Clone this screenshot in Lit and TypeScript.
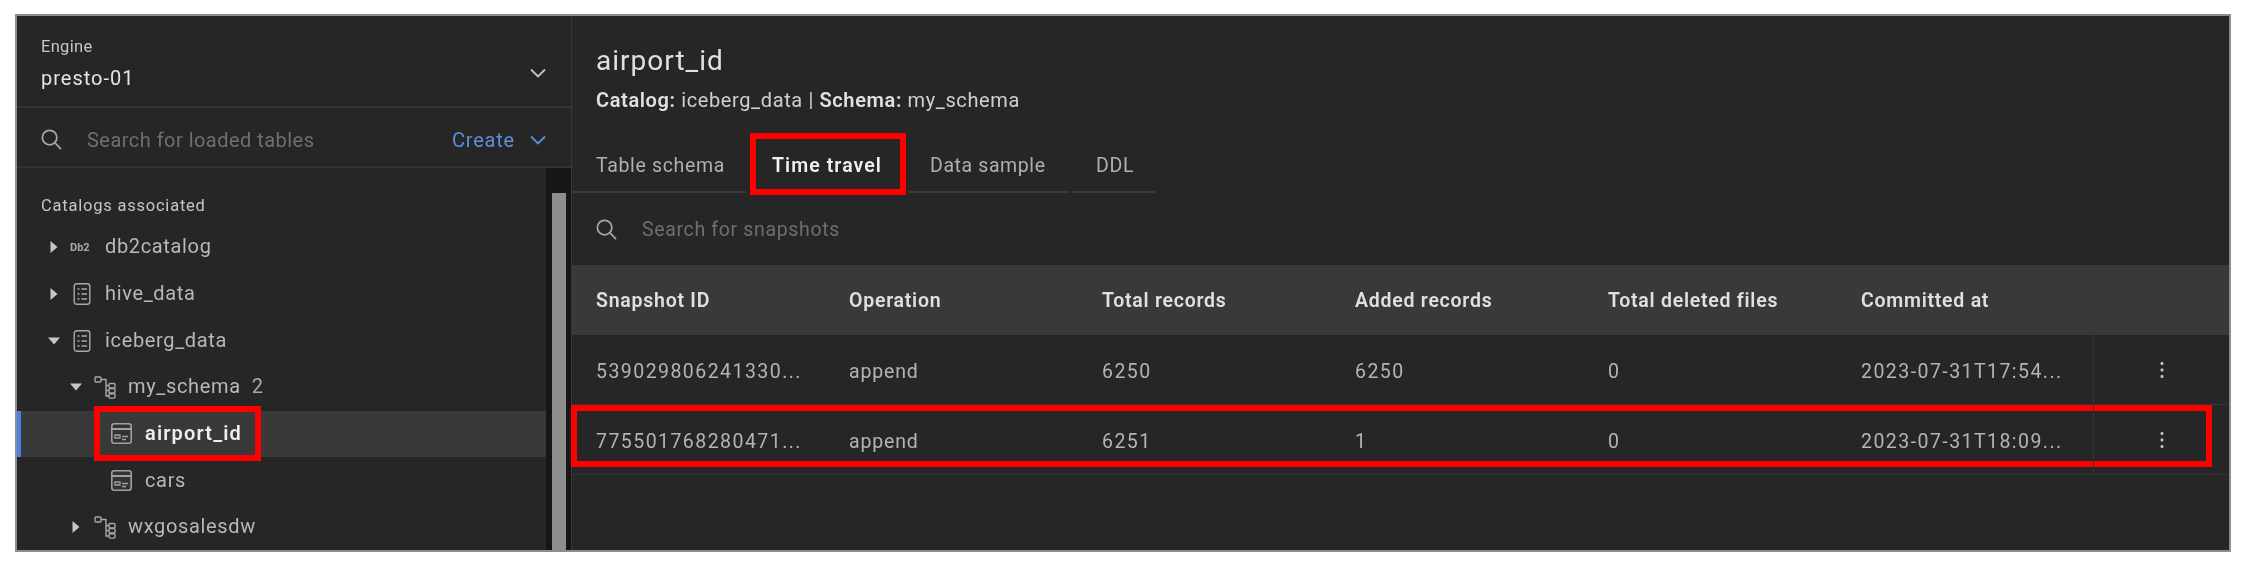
import { LitElement, html, css } from "lit";
import { customElement } from "lit/decorators.js";

const searchIcon = html`<svg class="search" viewBox="0 0 22 22" fill="none" stroke="currentColor" stroke-width="1.8"><circle cx="9" cy="9" r="7.6"/><path d="M14.6 14.6 21 21"/></svg>`;
const chevron = html`<svg class="chev" viewBox="0 0 16 10" fill="none" stroke="currentColor" stroke-width="1.8"><path d="M1 1.5 8 8.5 15 1.5"/></svg>`;
const catalogIcon = html`<svg class="ic cat" viewBox="0 0 18 22" fill="none" stroke="#a8a8a8" stroke-width="1.4"><rect x="1.2" y=".8" width="15.6" height="20.4" rx="2.4"/><path d="M4.5 6h2M4.5 11h2M4.5 16h2M8.5 6h5.5M8.5 11h5.5M8.5 16h5.5"/></svg>`;
const schemaIcon = html`<svg class="ic sch" viewBox="0 0 22 23" fill="none" stroke="#a8a8a8" stroke-width="1.4"><rect x="1" y="1" width="6" height="5" rx="1"/><path d="M7 3.5h5V20h3M12 9.5h3M12 14.5h3"/><rect x="15" y="7.5" width="6" height="4.4" rx="1"/><rect x="15" y="12.6" width="6" height="4.4" rx="1"/><rect x="15" y="17.7" width="6" height="4.4" rx="1"/></svg>`;
const tableIcon = html`<svg class="ic tbl" viewBox="0 0 21 21"><rect x=".8" y=".8" width="19.4" height="19.4" rx="2.4" fill="#333" stroke="#a0a0a0" stroke-width="1.6"/><path d="M1 6h19" stroke="#a0a0a0" stroke-width="2"/><path d="M4 12h5v3H4ZM11 13.5h6M11 16.5h4" fill="none" stroke="#a0a0a0" stroke-width="1.3"/></svg>`;
const arrowRight = html`<svg class="arr" viewBox="0 0 8 12"><path d="M.5 0 7.5 6 .5 12Z" fill="#c6c6c6"/></svg>`;
const arrowDown = html`<svg class="arr down" viewBox="0 0 12 8"><path d="M0 .5H12L6 7.5Z" fill="#c6c6c6"/></svg>`;
const kebab = html`<svg class="keb" viewBox="0 0 4 16" fill="#c6c6c6"><rect x=".6" y="0" width="2.8" height="3" rx="1"/><rect x=".6" y="6.5" width="2.8" height="3" rx="1"/><rect x=".6" y="13" width="2.8" height="3" rx="1"/></svg>`;

const cols = ["Snapshot ID", "Operation", "Total records", "Added records", "Total deleted files", "Committed at"];
const rows = [
  ["539029806241330...", "append", "6250", "6250", "0", "2023-07-31T17:54..."],
  ["775501768280471...", "append", "6251", "1", "0", "2023-07-31T18:09..."],
];

@customElement("app-root")
export class AppRoot extends LitElement {
  static styles = css`
    :host {
      display: block;
      width: 2246px;
      height: 564px;
      background: #fff;
      box-sizing: border-box;
      padding: 14px 15px 12px;
      font-family: Roboto, "Noto Sans", sans-serif;
      color: #c6c6c6;
      overflow: hidden;
    }
    .panel {
      display: flex;
      height: 538px;
      box-sizing: border-box;
      border: 2px solid #8d8d8d;
      background: #262626;
      filter: blur(0.55px);
    }
    .side {
      width: 554px;
      flex: none;
      display: flex;
      flex-direction: column;
      border-right: 1px solid #393939;
      box-sizing: content-box;
    }
    .engine {
      height: 92px;
      flex: none;
      box-sizing: border-box;
      border-bottom: 2px solid #333;
      padding: 19px 24px 0;
      display: flex;
      justify-content: space-between;
      align-items: flex-start;
    }
    .engine .lbl { font-size: 16.5px; line-height: 24px; color: #c6c6c6; letter-spacing: 0.3px; }
    .engine .val { font-size: 20px; line-height: 28px; margin-top: 5px; color: #e4e4e4; letter-spacing: 1px; }
    .engine .chev { margin-top: 33px; color: #c6c6c6; margin-right: 1px; }
    .chev { width: 16px; height: 10px; }
    .sbar {
      height: 60px;
      flex: none;
      box-sizing: border-box;
      border-bottom: 2px solid #333;
      padding: 5px 24px 0;
      display: flex;
      align-items: center;
    }
    .search { width: 21px; height: 21px; color: #a8a8a8; flex: none; }
    .ph { color: #6f6f6f; font-size: 20px; }
    .sbar .ph { margin-left: 25px; flex: 1; letter-spacing: 0.47px; }
    .create { color: #5f8fdc; font-size: 20px; letter-spacing: 0.8px; margin-right: 15px; }
    .sbar .chev { color: #5f8fdc; margin-right: 1px; }
    .treewrap { flex: 1; display: flex; min-height: 0; }
    .tree { flex: 1; min-width: 0; }
    .tree .head {
      height: 56px;
      box-sizing: border-box;
      padding: 24px 0 0 24px;
      font-size: 16.5px;
      line-height: 28px;
      letter-spacing: 0.78px;
    }
    .row {
      height: 46.67px;
      box-sizing: border-box;
      display: flex;
      align-items: center;
      font-size: 20px;
      color: #b8b8b8;
      position: relative;
      letter-spacing: 0.65px;
    }
    .row .txt { margin-top: -2px; }
    .row.l0 { padding-left: 32px; }
    .row.l1 { padding-left: 54px; }
    .row.l2 { padding-left: 94px; }
    .aw { width: 23px; flex: none; display: flex; align-items: center; padding-left: 1px; box-sizing: border-box; }
    .iw { width: 33px; flex: none; display: flex; align-items: center; }
    .l1 .iw, .l2 .iw { width: 34px; }
    .arr { width: 8px; height: 12px; }
    .arr.down { width: 12px; height: 8px; margin-left: -2px; }
    .ic.cat { width: 18px; height: 22px; margin-left: 1px; }
    .ic.sch { width: 22px; height: 23px; }
    .ic.tbl { width: 21px; height: 21px; }
    .db2 { font-size: 11px; font-weight: 700; color: #a8a8a8; letter-spacing: 0; margin-left: -2px; }
    .count { margin-left: 11px; color: #a8a8a8; margin-top: -2px; }
    .row.sel {
      background: #393939;
      box-shadow: inset 4px 0 0 #4a80e8;
      color: #eee;
      font-weight: 600;
      letter-spacing: 1.15px;
    }
    .mark {
      position: absolute;
      box-sizing: border-box;
      border: 6px solid #ff0000;
      pointer-events: none;
    }
    .mark.leaf { left: 77px; top: -5px; width: 167px; height: 55px; }
    .mark.tabm { left: 2px; top: -1px; width: 156px; height: 62px; }
    .mark.rowm { left: -1px; top: 0; width: 1641px; height: 62px; border-width: 6.5px; }
    .scroll { width: 25px; flex: none; background: #161616; padding: 25px 5px 0 6px; box-sizing: border-box; }
    .thumb { height: 100%; background: #8d8d8d; }
    .main { flex: 1; min-width: 0; display: flex; flex-direction: column; }
    .top { height: 118px; flex: none; box-sizing: border-box; padding: 26px 24px 0; }
    .title { font-size: 28px; line-height: 38px; color: #e0e0e0; letter-spacing: 1px; }
    .sub { font-size: 20px; line-height: 26px; margin-top: 7px; color: #d0d0d0; letter-spacing: 0.62px; }
    .sub b { font-weight: 600; color: #e0e0e0; }
    .tabs { display: flex; height: 59px; flex: none; gap: 2px; align-items: stretch; }
    .tab {
      padding: 6px 24px 0;
      display: flex;
      align-items: center;
      font-size: 19.5px;
      letter-spacing: 0.66px;
      color: #b0b0b0;
      box-sizing: border-box;
      border-bottom: 2px solid #393939;
      position: relative;
      white-space: nowrap;
    }
    .tab.w1 { width: 174px; }
    .tab.w2 { width: 158px; font-weight: 600; color: #f0f0f0; letter-spacing: 1.08px; border-bottom-color: transparent; }
    .tab.w3 { width: 162px; padding-left: 22px; letter-spacing: 0.6px; }
    .tab.w4 { width: 84px; }
    .tsearch {
      height: 72px;
      flex: none;
      box-sizing: border-box;
      padding: 0 24px;
      display: flex;
      align-items: center;
    }
    .tsearch .ph { margin-left: 25px; letter-spacing: 0.66px; font-size: 19.5px; }
    .grid { display: grid; grid-template-columns: repeat(5, 253px) 256px 1fr; }
    .th {
      height: 70px;
      background: #393939;
      display: flex;
      align-items: center;
      padding-left: 24px;
      font-size: 19.5px;
      font-weight: 600;
      color: #e0e0e0;
      letter-spacing: 0.75px;
      white-space: nowrap;
    }
    .td {
      height: 70px;
      box-sizing: border-box;
      border-bottom: 1px solid #333;
      display: flex;
      align-items: center;
      padding: 4px 0 0 24px;
      font-size: 19.5px;
      color: #b4b4b4;
      letter-spacing: 1.45px;
      white-space: nowrap;
      position: relative;
    }
    .td.word { letter-spacing: 0.85px; }
    .td.act { border-left: 1px solid #333; padding: 0 0 0 66px; }
    .keb { width: 4px; height: 16px; }
  `;

  private renderRow(level: number, arrow: unknown, icon: unknown, label: string, extra: unknown = "", sel = false) {
    return html`<div class="row l${level} ${sel ? "sel" : ""}">
      ${level < 2 ? html`<span class="aw">${arrow}</span>` : ""}
      <span class="iw">${icon}</span><span class="txt">${label}</span>${extra}
    </div>`;
  }

  render() {
    return html`<div class="panel">
      <aside class="side">
        <div class="engine">
          <div><div class="lbl">Engine</div><div class="val">presto-01</div></div>
          ${chevron}
        </div>
        <div class="sbar">${searchIcon}<span class="ph">Search for loaded tables</span><span class="create">Create</span>${chevron}</div>
        <div class="treewrap">
          <div class="tree">
            <div class="head">Catalogs associated</div>
            ${this.renderRow(0, arrowRight, html`<span class="db2">Db2</span>`, "db2catalog")}
            ${this.renderRow(0, arrowRight, catalogIcon, "hive_data")}
            ${this.renderRow(0, arrowDown, catalogIcon, "iceberg_data")}
            ${this.renderRow(1, arrowDown, schemaIcon, "my_schema", html`<span class="count">2</span>`)}
            ${this.renderRow(2, "", tableIcon, "airport_id", html`<div class="mark leaf"></div>`, true)}
            ${this.renderRow(2, "", tableIcon, "cars")}
            ${this.renderRow(1, arrowRight, schemaIcon, "wxgosalesdw")}
          </div>
          <div class="scroll"><div class="thumb"></div></div>
        </div>
      </aside>
      <main class="main">
        <div class="top">
          <div class="title">airport_id</div>
          <div class="sub"><b>Catalog:</b> iceberg_data | <b>Schema:</b> my_schema</div>
        </div>
        <div class="tabs">
          <div class="tab w1">Table schema</div>
          <div class="tab w2">Time travel<div class="mark tabm"></div></div>
          <div class="tab w3">Data sample</div>
          <div class="tab w4">DDL</div>
        </div>
        <div class="tsearch">${searchIcon}<span class="ph">Search for snapshots</span></div>
        <div class="grid">
          ${cols.map((c) => html`<div class="th">${c}</div>`)}<div class="th"></div>
          ${rows.map(
            (r, i) => html`${r.map((v, j) => html`<div class="td ${j === 1 ? "word" : ""}">${v}${i === 1 && j === 0 ? html`<div class="mark rowm"></div>` : ""}</div>`)}<div class="td act">${kebab}</div>`
          )}
        </div>
      </main>
    </div>`;
  }
}
